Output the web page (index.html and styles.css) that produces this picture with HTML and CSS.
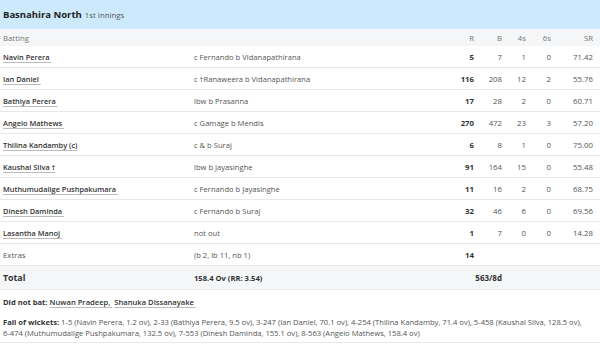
FILE: index.html
```html
<!DOCTYPE html>
<html>
<head>
<meta charset="utf-8">
<link rel="stylesheet" href="styles.css">
</head>
<body>
<div class="card">
  <div class="head"><span class="team">Basnahira North</span> <span class="inn">1st Innings</span></div>
  <table class="bat">
    <colgroup><col class="c-name"><col class="c-dis"><col class="c-r"><col class="c-b"><col class="c-4"><col class="c-6"><col class="c-sr"></colgroup>
    <thead>
      <tr><th class="l">Batting</th><th></th><th>R</th><th>B</th><th>4s</th><th>6s</th><th>SR</th></tr>
    </thead>
    <tbody>
      <tr><td class="nm"><a>Navin Perera&nbsp;</a></td><td class="ds">c Fernando b Vidanapathirana</td><td class="r">5</td><td>7</td><td>1</td><td>0</td><td>71.42</td></tr>
      <tr><td class="nm"><a>Ian Daniel&nbsp;</a></td><td class="ds">c †Ranaweera b Vidanapathirana</td><td class="r">116</td><td>208</td><td>12</td><td>2</td><td>55.76</td></tr>
      <tr><td class="nm"><a>Bathiya Perera&nbsp;</a></td><td class="ds">lbw b Prasanna</td><td class="r">17</td><td>28</td><td>2</td><td>0</td><td>60.71</td></tr>
      <tr><td class="nm"><a>Angelo Mathews&nbsp;</a></td><td class="ds">c Gamage b Mendis</td><td class="r">270</td><td>472</td><td>23</td><td>3</td><td>57.20</td></tr>
      <tr><td class="nm"><a>Thilina Kandamby (c)</a></td><td class="ds">c &amp; b Suraj</td><td class="r">6</td><td>8</td><td>1</td><td>0</td><td>75.00</td></tr>
      <tr><td class="nm"><a>Kaushal Silva †</a></td><td class="ds">lbw b Jayasinghe</td><td class="r">91</td><td>164</td><td>15</td><td>0</td><td>55.48</td></tr>
      <tr><td class="nm"><a>Muthumudalige Pushpakumara&nbsp;</a></td><td class="ds">c Fernando b Jayasinghe</td><td class="r">11</td><td>16</td><td>2</td><td>0</td><td>68.75</td></tr>
      <tr><td class="nm"><a>Dinesh Daminda&nbsp;</a></td><td class="ds">c Fernando b Suraj</td><td class="r">32</td><td>46</td><td>6</td><td>0</td><td>69.56</td></tr>
      <tr><td class="nm"><a>Lasantha Manoj&nbsp;</a></td><td class="ds">not out</td><td class="r">1</td><td>7</td><td>0</td><td>0</td><td>14.28</td></tr>
      <tr><td class="ex">Extras</td><td class="ds">(b 2, lb 11, nb 1)</td><td class="r">14</td><td></td><td></td><td></td><td></td></tr>
      <tr class="tot"><td class="tl">Total</td><td class="tov">158.4 Ov (RR: 3.54)</td><td class="tr" colspan="2">563/8d</td><td></td><td></td><td></td></tr>
    </tbody>
  </table>
  <div class="dnb"><b>Did not bat:</b> <a>Nuwan Pradeep,&nbsp;</a> <a>Shanuka Dissanayake&nbsp;</a></div>
  <div class="fow"><b>Fall of wickets:</b> 1-5 (Navin Perera, 1.2 ov), 2-33 (Bathiya Perera, 9.5 ov), 3-247 (Ian Daniel, 70.1 ov), 4-254 (Thilina Kandamby, 71.4 ov), 5-458 (Kaushal Silva, 128.5 ov), <span class="nw">6-474 (Muthumudalige</span> Pushpakumara, 132.5 ov), 7-553 (Dinesh Daminda, 155.1 ov), 8-563 (Angelo Mathews, 158.4 ov)</div>
</div>
</body>
</html>
```
FILE: styles.css
```css
html, body { margin: 0; padding: 0; background: #fff; }
body { font-family: "Open Sans", "Noto Sans", sans-serif; font-size: 7.6px; color: #333; }
.card { width: 600px; }
.head { background: #cdeafc; height: 29px; box-sizing: border-box; padding: 0 3px; display: flex; align-items: center; gap: 3px; }
.team { font-weight: 700; font-size: 9.5px; color: #222; }
.inn { font-size: 7.8px; color: #555; }
.bat { width: 600px; border-collapse: collapse; table-layout: fixed; }
.c-name { width: 194px; }
.c-dis { width: 262px; }
.c-r { width: 25px; }
.c-b { width: 28px; }
.c-4 { width: 24px; }
.c-6 { width: 25px; }
.c-sr { width: 42px; }
.bat th { background: #f5f6f7; height: 17px; font-weight: 400; color: #777; text-align: right; padding: 0 7px 0 0; font-size: 7.8px; }
.bat th.l { text-align: left; padding-left: 3px; }
.bat td { height: 21px; border-bottom: 1px solid #e8e8e8; text-align: right; padding: 0 7px 0 0; color: #555; white-space: nowrap; font-size: 7.8px; }
.bat td.nm, .bat td.ex, .bat td.tl { text-align: left; padding-left: 3px; }
.bat td.ds { text-align: left; padding: 0; color: #555; font-size: 7.6px; }
.bat td.r { font-weight: 700; color: #333; }
.nm a { font-weight: 600; font-size: 7.4px; color: #333; text-decoration: underline; text-decoration-color: #bbb; text-underline-offset: 2px; }
.ex { color: #555; }
.tot td { background: #f5f6f7; height: 23px; font-weight: 700; color: #333; border-bottom: 1px solid #e8e8e8; }
.bat td.tl { font-size: 8.8px; }
.bat td.tov { text-align: left; padding: 0; font-size: 7.6px; }
.bat td.tr { text-align: right; padding-right: 7px; font-size: 8px; }
.dnb { padding: 7px 3px 0; height: 18px; color: #333; }
.dnb b { font-weight: 700; }
.dnb a { font-weight: 600; text-decoration: underline; text-decoration-color: #bbb; text-underline-offset: 2px; }
.fow { padding: 2px 3px 3px; line-height: 11px; color: #555; border-bottom: 1px solid #e8e8e8; }
.fow b { color: #333; }
.nw { white-space: nowrap; }
```
